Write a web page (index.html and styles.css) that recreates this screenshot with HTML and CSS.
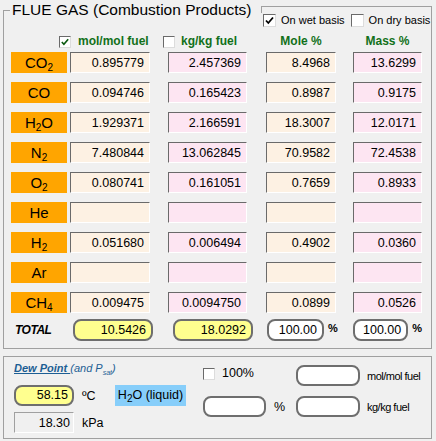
FILE: index.html
```html
<!DOCTYPE html>
<html lang="en">
<head>
  <meta charset="UTF-8" />
  <title>Flue Gas</title>
  <link rel="stylesheet" href="styles.css">
</head>
<body>

  <div class="flue">
    <h1 class="flue-title">FLUE GAS (Combustion Products)</h1>

    <div class="basis">
      <span class="check"><svg viewBox="0 0 11 11"><path d="M2 5.5 L4.3 8 L9 2.5" /></svg></span>
      <span class="opt">On wet basis</span>
      <span class="check gap"></span>
      <span class="opt">On dry basis</span>
    </div>

    <div class="cols head">
      <span></span>
      <div class="hcol mol"><span class="check small green"><svg viewBox="0 0 11 11"><path d="M2 5.5 L4.3 8 L9 2.5" /></svg></span>mol/mol fuel</div>
      <div class="hcol kg"><span class="check small"></span>kg/kg fuel</div>
      <div class="hcol pct w3">Mole %</div>
      <div class="hcol pct w4">Mass %</div>
    </div>

    <div class="cols rows" id="gasRows"></div>

    <div class="cols tot">
      <span class="total-lbl">TOTAL</span>
      <div><div class="pill yellow t1">10.5426</div></div>
      <div><div class="pill yellow t2">18.0292</div></div>
      <div class="pct-cell"><div class="pill t3">100.00</div><span class="pct-sign">%</span></div>
      <div class="pct-cell"><div class="pill t4">100.00</div><span class="pct-sign">%</span></div>
    </div>
  </div>

  <div class="dew">
    <div class="dew-a">
      <div class="dew-title"><span class="dew-link">Dew Point </span>(and P<sub>sat</sub>)</div>
      <div class="dew-row first">
        <div class="pill yellow dp">58.15</div>
        <span class="unit degc">ºC</span>
        <div class="liquid">H<sub>2</sub>O (liquid)</div>
      </div>
      <div class="dew-row">
        <div class="flat">18.30</div>
        <span class="unit">kPa</span>
      </div>
    </div>

    <div class="dew-b">
      <div class="dew-row">
        <span class="check small"></span>
        <span class="hundred">100%</span>
      </div>
      <div class="dew-row lower">
        <div class="pill blank b1"></div>
        <span class="unit">%</span>
      </div>
    </div>

    <div class="dew-c">
      <div class="dew-row">
        <div class="pill blank b2"></div>
        <span class="fuel-unit">mol/mol fuel</span>
      </div>
      <div class="dew-row next">
        <div class="pill blank b2"></div>
        <span class="fuel-unit">kg/kg fuel</span>
      </div>
    </div>
  </div>

  <script>
    const gases = [
      ['CO<sub>2</sub>', '0.895779', '2.457369', '8.4968', '13.6299'],
      ['CO', '0.094746', '0.165423', '0.8987', '0.9175'],
      ['H<sub>2</sub>O', '1.929371', '2.166591', '18.3007', '12.0171'],
      ['N<sub>2</sub>', '7.480844', '13.062845', '70.9582', '72.4538'],
      ['O<sub>2</sub>', '0.080741', '0.161051', '0.7659', '0.8933'],
      ['He', '', '', '', ''],
      ['H<sub>2</sub>', '0.051680', '0.006494', '0.4902', '0.0360'],
      ['Ar', '', '', '', ''],
      ['CH<sub>4</sub>', '0.009475', '0.0094750', '0.0899', '0.0526']
    ];

    const gasRows = document.getElementById('gasRows');
    gases.forEach(g => {
      gasRows.insertAdjacentHTML('beforeend', `
        <div class="lbl">${g[0]}</div>
        <div class="num w1 peach">${g[1]}</div>
        <div class="num w2 pink">${g[2]}</div>
        <div class="num w3 peach">${g[3]}</div>
        <div class="num w4 pink">${g[4]}</div>
      `);
    });
  </script>

</body>
</html>
```

FILE: styles.css
```css
body {
  margin: 0;
  background-color: #f0f0f0;
  font-family: "Liberation Sans", Arial, sans-serif;
  color: #000;
}

/* top group box */
.flue {
  position: relative;
  box-sizing: border-box;
  width: 429px;
  height: 339px;
  margin: 10px 0 0 3px;
  padding: 24px 0 0 7px;
  border: 1px solid #a0a0a0;
  border-top: none;
}
.flue::before {
  content: "";
  position: absolute;
  left: -1px;
  top: 0;
  width: 7px;
  border-top: 1px solid #a0a0a0;
}
.flue-title {
  position: absolute;
  left: 8px;
  top: -10px;
  margin: 0;
  font-size: 15.5px;
  font-weight: normal;
  line-height: 20px;
  white-space: nowrap;
}

.basis {
  position: absolute;
  left: 257px;
  top: -4px;
  box-sizing: border-box;
  width: 171px;
  height: 22px;
  padding: 5px 0 0 2px;
  border-top: 1px solid #a0a0a0;
  display: flex;
  align-items: center;
  align-self: flex-start;
  font-size: 11px;
}
.basis::before {
  content: "";
  position: absolute;
  top: -1px;
  left: 0;
  right: 0;
  height: 7px;
  border-left: 1px solid #a0a0a0;
  border-right: 1px solid #a0a0a0;
}
.basis .opt {
  margin-left: 5px;
  line-height: 13px;
  white-space: nowrap;
}
.basis .gap {
  margin-left: 6px;
}

/* checkbox */
.check {
  display: inline-block;
  flex: none;
  box-sizing: border-box;
  width: 13px;
  height: 13px;
  background: #fff;
  border: 1px solid;
  border-color: #6a6a6a #dcdcdc #dcdcdc #6a6a6a;
}
.check.small {
  width: 12px;
  height: 12px;
}
.check svg {
  display: block;
  width: 11px;
  height: 11px;
}
.check path {
  fill: none;
  stroke: #000;
  stroke-width: 1.8;
}
.check.small svg {
  width: 10px;
  height: 10px;
}
.check.green path {
  stroke: #0b5a10;
}

/* table grid */
.cols {
  display: grid;
  grid-template-columns: 59px 98px 98px 87px 69px;
}
.head {
  height: 15px;
  margin-bottom: 3px;
  align-items: center;
}
.hcol {
  display: flex;
  align-items: center;
  gap: 6px;
  color: #12701a;
  font-size: 12px;
  font-weight: bold;
  line-height: 15px;
  white-space: nowrap;
}
.hcol.mol {
  margin-left: -11px;
  gap: 7px;
}
.hcol.kg {
  margin-left: -5px;
}
.hcol.pct {
  justify-content: center;
}

.rows {
  row-gap: 9px;
}
.lbl {
  width: 56px;
  height: 21px;
  background: #ffa500;
  text-align: center;
  font-size: 15px;
  line-height: 21px;
}
.lbl sub, .liquid sub {
  font-size: 10px;
  line-height: 0;
  vertical-align: -3px;
}
.num {
  box-sizing: border-box;
  height: 21px;
  padding: 1px 5px 0 0;
  border: 1px solid;
  border-color: #6a6a6a #fff #fff #6a6a6a;
  text-align: right;
  font-size: 12.5px;
  line-height: 18px;
}
.w1 { width: 80px; }
.w2 { width: 79px; }
.w3 { width: 70px; }
.w4 { width: 69px; }
.peach { background: #fdf1e3; }
.pink { background: #fde5f2; }

/* totals */
.tot {
  margin-top: 6px;
  align-items: center;
}
.total-lbl {
  margin-left: 4px;
  font-size: 12px;
  font-weight: bold;
  font-style: italic;
  letter-spacing: -0.5px;
}
.pill {
  box-sizing: border-box;
  height: 22px;
  padding-right: 5px;
  border: 2px solid #6e6e6e;
  border-radius: 8px;
  background: #fff;
  text-align: right;
  font-size: 12.5px;
  line-height: 18px;
}
.pill.yellow { background: #ffff8f; }
.t1 { width: 80px; margin-left: 3px; }
.t2 { width: 80px; margin-left: 5px; }
.t3 { width: 57px; margin-left: 1px; }
.t4 { width: 57px; }
.pct-cell {
  display: flex;
  align-items: center;
}
.pct-sign {
  margin: -5px 0 0 4px;
  font-size: 11px;
  font-weight: bold;
}

/* dew point group box */
.dew {
  box-sizing: border-box;
  width: 429px;
  height: 83px;
  margin: 7px 0 0 3px;
  padding-left: 10px;
  border: 1px solid #a0a0a0;
  display: grid;
  grid-template-columns: 189px 93px auto;
  font-size: 12.5px;
}
.dew-title {
  margin-top: 4px;
  font-size: 11px;
  font-style: italic;
  line-height: 14px;
  color: #1c5e94;
}
.dew-title sub {
  font-size: 7px;
  line-height: 0;
}
.dew-link {
  font-weight: bold;
  text-decoration: underline;
}
.dew-row {
  display: flex;
  align-items: center;
}
.dew-row.first {
  margin-top: 10px;
}
.dew-row.first + .dew-row {
  margin-top: 6px;
}
.dp {
  width: 60px;
  height: 21px;
  padding-right: 4px;
  line-height: 17px;
}
.unit {
  margin-left: 8px;
}
.degc {
  width: 33px;
}
.liquid {
  width: 71px;
  height: 21px;
  background: #87cefa;
  text-align: center;
  line-height: 21px;
}
.flat {
  box-sizing: border-box;
  width: 60px;
  height: 21px;
  padding: 1px 3px 0 0;
  border: 1px solid;
  border-color: #a0a0a0 #fff #fff #a0a0a0;
  text-align: right;
  line-height: 18px;
}

.dew-b {
  padding-top: 10px;
}
.hundred {
  margin-left: 7px;
  line-height: 13px;
}
.dew-row.lower {
  margin-top: 16px;
}
.blank {
  height: 21px;
}
.b1 { width: 63px; }
.b2 { width: 64px; }

.dew-c {
  padding-top: 8px;
}
.dew-row.next {
  margin-top: 10px;
}
.fuel-unit {
  margin-left: 7px;
  font-size: 11px;
  letter-spacing: -0.5px;
}
```
